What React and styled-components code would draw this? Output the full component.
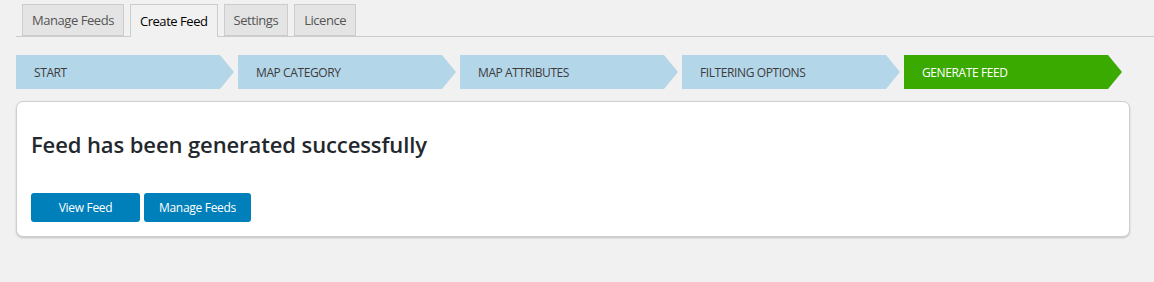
import styled, { createGlobalStyle } from "styled-components";

const GlobalStyle = createGlobalStyle`
  html, body {
    margin: 0;
    background: #f1f1f1;
    font-family: "Open Sans", "Noto Sans", sans-serif;
  }
`;

const Page = styled.div`
  padding: 4px 24px 40px 16px;
`;

const TabBar = styled.nav`
  display: flex;
  gap: 6px;
  padding-left: 6px;
  margin-right: -24px;
  border-bottom: 1px solid #cccccc;
  height: 32px;
  align-items: flex-end;
`;

const Tab = styled.a`
  box-sizing: border-box;
  display: flex;
  align-items: center;
  height: ${(p) => (p.$active ? "33px" : "32px")};
  margin-bottom: ${(p) => (p.$active ? "-1px" : "0")};
  padding: 0 9px;
  border: 1px solid #cccccc;
  border-bottom: ${(p) => (p.$active ? "none" : "1px solid #cccccc")};
  background: ${(p) => (p.$active ? "#f1f1f1" : "#e4e4e4")};
  color: ${(p) => (p.$active ? "#000" : "#555")};
  font-size: 13px;
  letter-spacing: -0.45px;
  cursor: pointer;
`;

const Steps = styled.ol`
  display: flex;
  gap: 4px;
  list-style: none;
  margin: 18px 0 0;
  padding: 0;
`;

const Step = styled.li`
  box-sizing: border-box;
  position: relative;
  width: 204px;
  height: 34px;
  margin-right: 14px;
  padding-left: 18px;
  display: flex;
  align-items: center;
  background: ${(p) => (p.$done ? "#3aaa00" : "#b4d6e9")};
  color: ${(p) => (p.$done ? "#fff" : "#3c3c3c")};
  font-size: 12px;
  letter-spacing: -0.4px;
  text-transform: uppercase;

  &::after {
    content: "";
    position: absolute;
    top: 0;
    left: 100%;
    border-style: solid;
    border-width: 17px 0 17px 14px;
    border-color: transparent transparent transparent
      ${(p) => (p.$done ? "#3aaa00" : "#b4d6e9")};
  }
`;

const Card = styled.section`
  margin-top: 12px;
  background: #fff;
  border: 1px solid #cfcfcf;
  border-radius: 7px;
  box-shadow: 0 1px 2px rgba(0, 0, 0, 0.2);
  padding: 27px 14px 14px;
`;

const Title = styled.h2`
  margin: 0 0 34px;
  font-size: 22px;
  font-weight: 600;
  color: #23282d;
  letter-spacing: -0.1px;
  line-height: 30px;
`;

const Actions = styled.div`
  display: flex;
  gap: 4px;
`;

const Button = styled.button`
  box-sizing: border-box;
  height: 29px;
  padding: 0 14px;
  min-width: ${(p) => p.$min || "auto"};
  border: none;
  border-radius: 3px;
  background: #0080ba;
  color: #fff;
  font-family: inherit;
  font-size: 12px;
  letter-spacing: -0.3px;
  cursor: pointer;
`;

const tabs = ["Manage Feeds", "Create Feed", "Settings", "Licence"];
const steps = [
  "Start",
  "Map Category",
  "Map Attributes",
  "Filtering Options",
  "Generate Feed",
];

export default function App() {
  return (
    <>
      <GlobalStyle />
      <Page>
        <TabBar>
          {tabs.map((t) => (
            <Tab key={t} $active={t === "Create Feed"}>
              {t}
            </Tab>
          ))}
        </TabBar>
        <Steps>
          {steps.map((s, i) => (
            <Step key={s} $done={i === steps.length - 1}>
              {s}
            </Step>
          ))}
        </Steps>
        <Card>
          <Title>Feed has been generated successfully</Title>
          <Actions>
            <Button $min="109px">View Feed</Button>
            <Button $min="107px">Manage Feeds</Button>
          </Actions>
        </Card>
      </Page>
    </>
  );
}
